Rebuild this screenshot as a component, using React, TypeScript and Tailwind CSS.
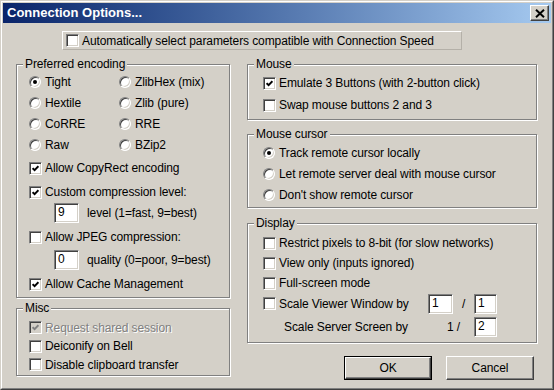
import React from "react";

function Check({ checked, disabled }: { checked?: boolean; disabled?: boolean }) {
  return (
    <span
      className={
        disabled
          ? "flex h-[13px] w-[13px] shrink-0 items-center justify-center border border-t-[#808080] border-l-[#808080] border-b-white border-r-white bg-[#d4d0c8] shadow-[inset_1px_1px_0_#404040,inset_-1px_-1px_0_#d4d0c8]"
          : "flex h-[13px] w-[13px] shrink-0 items-center justify-center border border-t-[#808080] border-l-[#808080] border-b-white border-r-white bg-white shadow-[inset_1px_1px_0_#404040,inset_-1px_-1px_0_#d4d0c8]"
      }
    >
      {checked && (
        <svg width="7" height="7" viewBox="0 0 7 7">
          <path d="M0.6 3.2 L2.6 5.2 L6.4 1.2" fill="none" stroke={disabled ? "#808080" : "#000"} strokeWidth="1.9" />
        </svg>
      )}
    </span>
  );
}

function Radio({ checked }: { checked?: boolean }) {
  return (
    <span className="flex h-[12px] w-[12px] shrink-0 items-center justify-center rounded-full border border-t-[#808080] border-l-[#808080] border-b-white border-r-white bg-white shadow-[inset_1px_1px_0_#404040,inset_-1px_-1px_0_#d4d0c8]">
      {checked && <span className="h-[4px] w-[4px] rounded-full bg-black" />}
    </span>
  );
}

function CheckRow({
  label,
  checked,
  disabled,
  className,
}: {
  label: string;
  checked?: boolean;
  disabled?: boolean;
  className: string;
}) {
  return (
    <div className={className}>
      <Check checked={checked} disabled={disabled} />
      <span className={disabled ? "ml-[3px] text-[#808080] [text-shadow:1px_1px_0_#fff]" : "ml-[3px]"}>{label}</span>
    </div>
  );
}

function RadioRow({ label, checked, className }: { label: string; checked?: boolean; className: string }) {
  return (
    <div className={className}>
      <Radio checked={checked} />
      <span className="ml-[4px]">{label}</span>
    </div>
  );
}

function Field({ value, className }: { value: string; className: string }) {
  return (
    <div className={className}>
      <span className="pl-[3px] pt-[2px] leading-[13px]">{value}</span>
    </div>
  );
}

function Group({ title, className, children }: { title: string; className: string; children: React.ReactNode }) {
  return (
    <fieldset className={className}>
      <legend className="ml-[6px] bg-[#d4d0c8] px-[2px] leading-[14px]">{title}</legend>
      {children}
    </fieldset>
  );
}

const fieldCls =
  "flex h-[20px] items-start border border-t-[#808080] border-l-[#808080] border-b-white border-r-white bg-white shadow-[inset_1px_1px_0_#404040,inset_-1px_-1px_0_#d4d0c8]";

export default function App() {
  return (
    <div className="h-[390px] w-[554px] bg-[#d4d0c8] font-['Liberation_Sans',Arial,sans-serif] text-[12px] leading-[14px] tracking-[-0.1px] text-black">
      <div className="h-full border border-t-[#d4d0c8] border-l-[#d4d0c8] border-b-[#404040] border-r-[#404040]">
        <div className="flex h-full flex-col border border-t-white border-l-white border-b-[#808080] border-r-[#808080] p-px">
          {/* Title bar */}
          <div className="flex h-[20px] shrink-0 items-center justify-between bg-linear-to-r from-[#0a246a] to-[#a6caf0] pl-[4px] pr-[2px]">
            <span className="text-[13px] font-bold tracking-[0px] text-white">Connection Options...</span>
            <div className="flex h-[16px] w-[19px] items-center justify-center border border-t-white border-l-white border-b-[#404040] border-r-[#404040] bg-[#d4d0c8] shadow-[inset_-1px_-1px_0_#808080]">
              <svg width="10" height="9" viewBox="0 0 10 9">
                <path d="M1 0.8 L9 8.2 M9 0.8 L1 8.2" stroke="#000" strokeWidth="2" />
              </svg>
            </div>
          </div>

          {/* Auto select */}
          <div className="ml-[59px] mt-[8px] flex h-[19px] w-[400px] items-center border border-t-white border-l-white border-b-[#b4b0a8] border-r-[#b4b0a8] pl-[3px]">
            <Check />
            <span className="ml-[3px]">Automatically select parameters compatible with Connection Speed</span>
          </div>

          {/* Columns */}
          <div className="ml-[13px] mt-[7px] flex gap-[17px]">
            {/* Left */}
            <div className="flex w-[214px] flex-col">
              <Group
                title="Preferred encoding"
                className="border border-[#808080] shadow-[inset_1px_1px_0_#fff,1px_1px_0_#fff]"
              >
                <div className="flex flex-col pb-[2px] pl-[12px]">
                  <div className="grid grid-cols-[90px_auto]">
                    <RadioRow label="Tight" checked className="flex h-[21px] items-center" />
                    <RadioRow label="ZlibHex (mix)" className="flex h-[21px] items-center" />
                    <RadioRow label="Hextile" className="flex h-[21px] items-center" />
                    <RadioRow label="Zlib (pure)" className="flex h-[21px] items-center" />
                    <RadioRow label="CoRRE" className="flex h-[21px] items-center" />
                    <RadioRow label="RRE" className="flex h-[21px] items-center" />
                    <RadioRow label="Raw" className="flex h-[21px] items-center" />
                    <RadioRow label="BZip2" className="flex h-[21px] items-center" />
                  </div>
                  <CheckRow label="Allow CopyRect encoding" checked className="mt-[2px] flex h-[22px] items-center" />
                  <CheckRow label="Custom compression level:" checked className="mt-[2px] flex h-[22px] items-center" />
                  <div className="flex h-[20px] items-center">
                    <Field value="9" className={`ml-[25px] w-[25px] ${fieldCls}`} />
                    <span className="ml-[8px]">level (1=fast, 9=best)</span>
                  </div>
                  <CheckRow label="Allow JPEG compression:" className="mt-[3px] flex h-[22px] items-center" />
                  <div className="mt-[2px] flex h-[20px] items-center">
                    <Field value="0" className={`ml-[25px] w-[25px] ${fieldCls}`} />
                    <span className="ml-[8px]">quality (0=poor, 9=best)</span>
                  </div>
                  <CheckRow label="Allow Cache Management" checked className="mt-[3px] flex h-[22px] items-center" />
                </div>
              </Group>

              <Group
                title="Misc"
                className="mt-[3px] border border-[#808080] shadow-[inset_1px_1px_0_#fff,1px_1px_0_#fff]"
              >
                <div className="flex flex-col pb-[1px] pl-[12px] pt-[3px]">
                  <CheckRow label="Request shared session" checked disabled className="flex h-[19px] items-center" />
                  <CheckRow label="Deiconify on Bell" className="flex h-[18px] items-center" />
                  <CheckRow label="Disable clipboard transfer" className="flex h-[19px] items-center" />
                </div>
              </Group>
            </div>

            {/* Right */}
            <div className="flex w-[290px] flex-col">
              <Group title="Mouse" className="border border-[#808080] shadow-[inset_1px_1px_0_#fff,1px_1px_0_#fff]">
                <div className="flex flex-col pb-[3px] pl-[15px] pt-[1px]">
                  <CheckRow label="Emulate 3 Buttons (with 2-button click)" checked className="flex h-[22px] items-center" />
                  <CheckRow label="Swap mouse buttons 2 and 3" className="flex h-[22px] items-center" />
                </div>
              </Group>

              <Group
                title="Mouse cursor"
                className="mt-[7px] border border-[#808080] shadow-[inset_1px_1px_0_#fff,1px_1px_0_#fff]"
              >
                <div className="flex flex-col pb-[2px] pl-[15px] pt-[1px]">
                  <RadioRow label="Track remote cursor locally" checked className="flex h-[21px] items-center" />
                  <RadioRow label="Let remote server deal with mouse cursor" className="flex h-[21px] items-center" />
                  <RadioRow label="Don't show remote cursor" className="flex h-[21px] items-center" />
                </div>
              </Group>

              <Group
                title="Display"
                className="mt-[8px] border border-[#808080] shadow-[inset_1px_1px_0_#fff,1px_1px_0_#fff]"
              >
                <div className="flex flex-col pb-[5px] pl-[15px] pt-[3px]">
                  <CheckRow label="Restrict pixels to 8-bit (for slow networks)" className="flex h-[20px] items-center" />
                  <CheckRow label="View only (inputs ignored)" className="flex h-[20px] items-center" />
                  <CheckRow label="Full-screen mode" className="flex h-[20px] items-center" />
                  <div className="flex h-[21px] items-center">
                    <Check />
                    <span className="ml-[3px] w-[149px]">Scale Viewer Window by</span>
                    <Field value="1" className={`w-[25px] ${fieldCls}`} />
                    <span className="w-[21px] text-center">/</span>
                    <Field value="1" className={`w-[23px] ${fieldCls}`} />
                  </div>
                  <div className="mt-[3px] flex h-[20px] items-center">
                    <span className="ml-[21px] w-[163px]">Scale Server Screen by</span>
                    <span className="w-[27px]">1 /</span>
                    <Field value="2" className={`w-[23px] ${fieldCls}`} />
                  </div>
                </div>
              </Group>

              <div className="mt-[13px] flex justify-end gap-[14px] pr-[3px]">
                <div className="h-[24px] w-[88px] border border-black">
                  <div className="flex h-full w-full items-center justify-center border border-t-white border-l-white border-b-[#404040] border-r-[#404040] shadow-[inset_-1px_-1px_0_#808080]">
                    OK
                  </div>
                </div>
                <div className="flex h-[24px] w-[88px] items-center justify-center border border-t-white border-l-white border-b-[#404040] border-r-[#404040] shadow-[inset_-1px_-1px_0_#808080]">
                  Cancel
                </div>
              </div>
            </div>
          </div>
        </div>
      </div>
    </div>
  );
}
